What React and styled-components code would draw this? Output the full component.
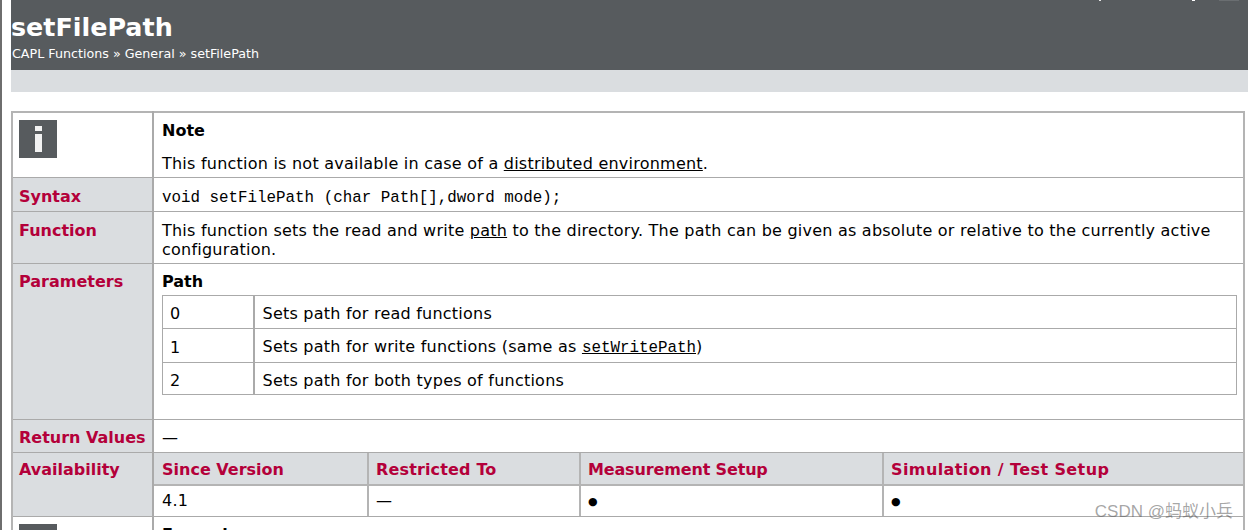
import React from 'react';
import styled, { createGlobalStyle } from 'styled-components';

const GlobalStyle = createGlobalStyle`
  html, body {
    margin: 0;
    padding: 0;
    height: 530px;
    overflow: hidden;
    background: #fff;
  }
  body {
    font-family: "DejaVu Sans", Verdana, sans-serif;
    font-size: 16px;
    color: #000;
  }
`;

const Page = styled.div`
  height: 530px;
  overflow: hidden;
  border-left: 2px solid #6e6e6e;
  padding-left: 9px;
  position: relative;
`;

const Header = styled.header`
  height: 70px;
  box-sizing: border-box;
  padding: 12px 0 0 0;
  background: #575b5e;
  color: #fff;
`;

const Title = styled.h1`
  margin: 0;
  font-size: 25.4px;
  line-height: 31px;
  font-weight: bold;
`;

const Crumbs = styled.div`
  font-size: 12.7px;
  line-height: 18px;
  margin: 2px 0 0 1px;
`;

// bottoms of the toolbar links that are scrolled off the top of the page
const ClippedMark = styled.span`
  position: absolute;
  top: 0;
  left: ${props => props.x}px;
  width: ${props => props.w}px;
  height: 1px;
  background: ${props => props.color};
`;

const Band = styled.div`
  height: 22px;
  background: #dadde0;
`;

const MainTable = styled.table`
  width: 1234px;
  margin-top: 19px;
  border-collapse: collapse;
  table-layout: fixed;
  border: 2px solid #b4b4b4;
`;

const LabelCol = styled.col`
  width: 141px;
`;

const Row = styled.tr`
  height: ${props => props.h}px;
`;

const Label = styled.th`
  box-sizing: border-box;
  padding: ${props => props.top || 8}px 0 0 6px;
  vertical-align: top;
  text-align: left;
  background: #dadde0;
  border: 1px solid #aaa;
  border-right-width: 2px;
  color: #b4003a;
  font-size: 16px;
  line-height: 19px;
  font-weight: bold;
`;

const Cell = styled.td`
  padding: ${props => (props.flush ? '0' : `${props.top || 8}px 8px 0`)};
  vertical-align: top;
  border: 1px solid #aaa;
  line-height: 19px;
  letter-spacing: 0.23px;
`;

const IconCell = styled.td`
  padding: 7px 0 0 6px;
  vertical-align: top;
  border: 1px solid #aaa;
  border-right-width: 2px;
`;

const InfoIcon = styled.svg`
  display: block;
  width: 38px;
  height: 38px;
`;

const NoteTitle = styled.div`
  font-weight: bold;
  line-height: 19px;
  margin-bottom: 14px;
  letter-spacing: 0;
`;

const Code = styled.code`
  font-family: "Liberation Mono", "Courier New", monospace;
  font-size: 15.85px;
  letter-spacing: 0;
`;

const SubTitle = styled.div`
  font-weight: bold;
  line-height: 19px;
  margin-bottom: 4px;
  letter-spacing: 0;
`;

const DocLink = styled.a`
  color: #000;
  text-decoration: underline;
`;

const ValueTable = styled.table`
  width: 1075px;
  border-collapse: collapse;
  table-layout: fixed;
  border: 1px solid #aaa;
`;

const ValueRow = styled.tr`
  height: ${props => props.h}px;
`;

const ValueKey = styled.td`
  width: 91px;
  box-sizing: border-box;
  padding: 4px 7px 0;
  border: 1px solid #aaa;
  border-right-width: 2px;
`;

const ValueText = styled.td`
  padding: 4px 8px 0;
  border: 1px solid #aaa;
`;

const AvailTable = styled.table`
  width: 100%;
  height: 63px;
  border-collapse: collapse;
  table-layout: fixed;
`;

const AvailHead = styled.th`
  width: ${props => (props.w ? `${props.w}px` : 'auto')};
  box-sizing: border-box;
  height: 32px;
  padding: 2px 8px 0;
  text-align: left;
  background: #dadde0;
  color: #b4003a;
  font-size: 16px;
  font-weight: bold;
  letter-spacing: ${props => props.spacing || 0}px;
  border-right: 2px solid #b4b4b4;
  border-bottom: 2px solid #b4b4b4;

  & + & {
    padding-left: 7px;
  }

  &:last-child {
    border-right: 0;
  }
`;

const AvailCell = styled.td`
  padding: 0 8px;
  border-right: 2px solid #b4b4b4;

  & + & {
    padding-left: 7px;
  }

  &:last-child {
    border-right: 0;
  }
`;

const Dot = styled.span`
  font-size: 11px;
`;

const Watermark = styled.div`
  position: absolute;
  right: 15px;
  top: 501px;
  font-family: "Liberation Sans", "Noto Sans CJK SC", sans-serif;
  font-size: 17px;
  line-height: 22px;
  color: rgba(90, 90, 90, 0.55);
`;

const values = [
  { key: '0', h: 33, text: 'Sets path for read functions' },
  { key: '1', h: 34, text: <>Sets path for write functions (same as <DocLink href="#"><Code>setWritePath</Code></DocLink>)</> },
  { key: '2', h: 32, text: 'Sets path for both types of functions' },
];

const Info = () => (
  <InfoIcon viewBox="0 0 38 38">
    <rect width="38" height="38" fill="#575b5e" />
    <rect x="16" y="6" width="7" height="5" fill="#f2f2f2" />
    <rect x="16" y="14" width="7" height="18" fill="#f2f2f2" />
  </InfoIcon>
);

const App = () => (
  <Page>
    <GlobalStyle />
    <Header>
      <Title>setFilePath</Title>
      <Crumbs>CAPL Functions » General » setFilePath</Crumbs>
      <ClippedMark x={1097} w={2} color="#e6e6e6" />
      <ClippedMark x={1190} w={3} color="#ffffff" />
      <ClippedMark x={1217} w={20} color="#6a6e71" />
    </Header>
    <Band />
    <MainTable>
      <colgroup>
        <LabelCol />
        <col />
      </colgroup>
      <tbody>
        <Row h={65}>
          <IconCell><Info /></IconCell>
          <Cell>
            <NoteTitle>Note</NoteTitle>
            This function is not available in case of a <DocLink href="#">distributed environment</DocLink>.
          </Cell>
        </Row>
        <Row h={34}>
          <Label top={9}>Syntax</Label>
          <Cell top={9}><Code>void setFilePath (char Path[],dword mode);</Code></Cell>
        </Row>
        <Row h={52}>
          <Label top={9}>Function</Label>
          <Cell top={9}>
            This function sets the read and write <DocLink href="#">path</DocLink> to the directory. The path can be given as absolute or relative to the currently active configuration.
          </Cell>
        </Row>
        <Row h={156}>
          <Label>Parameters</Label>
          <Cell>
            <SubTitle>Path</SubTitle>
            <ValueTable>
              <tbody>
                {values.map(({ key, h, text }) => (
                  <ValueRow key={key} h={h}>
                    <ValueKey>{key}</ValueKey>
                    <ValueText>{text}</ValueText>
                  </ValueRow>
                ))}
              </tbody>
            </ValueTable>
          </Cell>
        </Row>
        <Row h={33}>
          <Label>Return Values</Label>
          <Cell>—</Cell>
        </Row>
        <Row h={64}>
          <Label top={7}>Availability</Label>
          <Cell flush>
            <AvailTable>
              <thead>
                <tr>
                  <AvailHead w={214}>Since Version</AvailHead>
                  <AvailHead w={212} spacing={0.15}>Restricted To</AvailHead>
                  <AvailHead w={303} spacing={-0.15}>Measurement Setup</AvailHead>
                  <AvailHead spacing={0.4}>Simulation / Test Setup</AvailHead>
                </tr>
              </thead>
              <tbody>
                <tr>
                  <AvailCell>4.1</AvailCell>
                  <AvailCell>—</AvailCell>
                  <AvailCell><Dot>●</Dot></AvailCell>
                  <AvailCell><Dot>●</Dot></AvailCell>
                </tr>
              </tbody>
            </AvailTable>
          </Cell>
        </Row>
        <Row h={66}>
          <IconCell><Info /></IconCell>
          <Cell>
            <NoteTitle>Example</NoteTitle>
          </Cell>
        </Row>
      </tbody>
    </MainTable>
    <Watermark>CSDN @蚂蚁小兵</Watermark>
  </Page>
);

export default App;
